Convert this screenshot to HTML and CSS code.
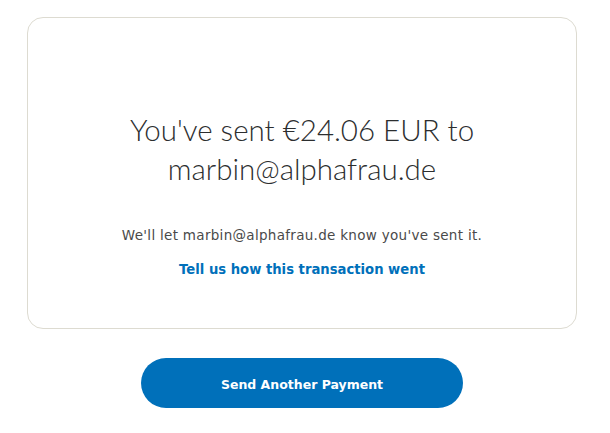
FILE: index.html
```html
<!DOCTYPE html>
<html>
<head>
<meta charset="utf-8">
<link rel="stylesheet" href="styles.css">
</head>
<body>
<main class="page">
  <section class="card">
    <h1 class="title">You've sent €24.06 EUR to marbin@alphafrau.de</h1>
    <p class="note">We'll let marbin@alphafrau.de know you've sent it.</p>
    <a class="feedback" href="#">Tell us how this transaction went</a>
  </section>
  <div class="actions">
    <button class="primary">Send Another Payment</button>
  </div>
</main>
</body>
</html>
```
FILE: styles.css
```css
html, body {
  margin: 0;
  padding: 0;
  background: #ffffff;
}
.page {
  width: 550px;
  margin-left: 27px;
  padding-top: 17px;
  font-family: "DejaVu Sans", sans-serif;
}
.card {
  box-sizing: border-box;
  height: 312px;
  border: 1px solid #dddbd1;
  border-radius: 16px;
  display: flex;
  flex-direction: column;
  align-items: center;
  padding-top: 92px;
}
.title {
  margin: 0;
  width: 370px;
  text-align: center;
  font-family: "Lato", sans-serif;
  font-weight: 300;
  font-size: 29.5px;
  line-height: 39px;
  color: #2c2e2f;
}
.note {
  margin: 37px 0 0;
  font-size: 13.5px;
  letter-spacing: 0.3px;
  line-height: 20px;
  color: #4a4a4a;
}
.feedback {
  margin-top: 15px;
  font-size: 13.2px;
  font-weight: bold;
  line-height: 20px;
  color: #0070ba;
  text-decoration: none;
}
.actions {
  display: flex;
  justify-content: center;
  margin-top: 29px;
}
.primary {
  width: 322px;
  height: 50px;
  padding-top: 3px;
  border: none;
  border-radius: 25px;
  background: #0070ba;
  color: #ffffff;
  font-family: "DejaVu Sans", sans-serif;
  font-weight: bold;
  font-size: 12.5px;
}
```
